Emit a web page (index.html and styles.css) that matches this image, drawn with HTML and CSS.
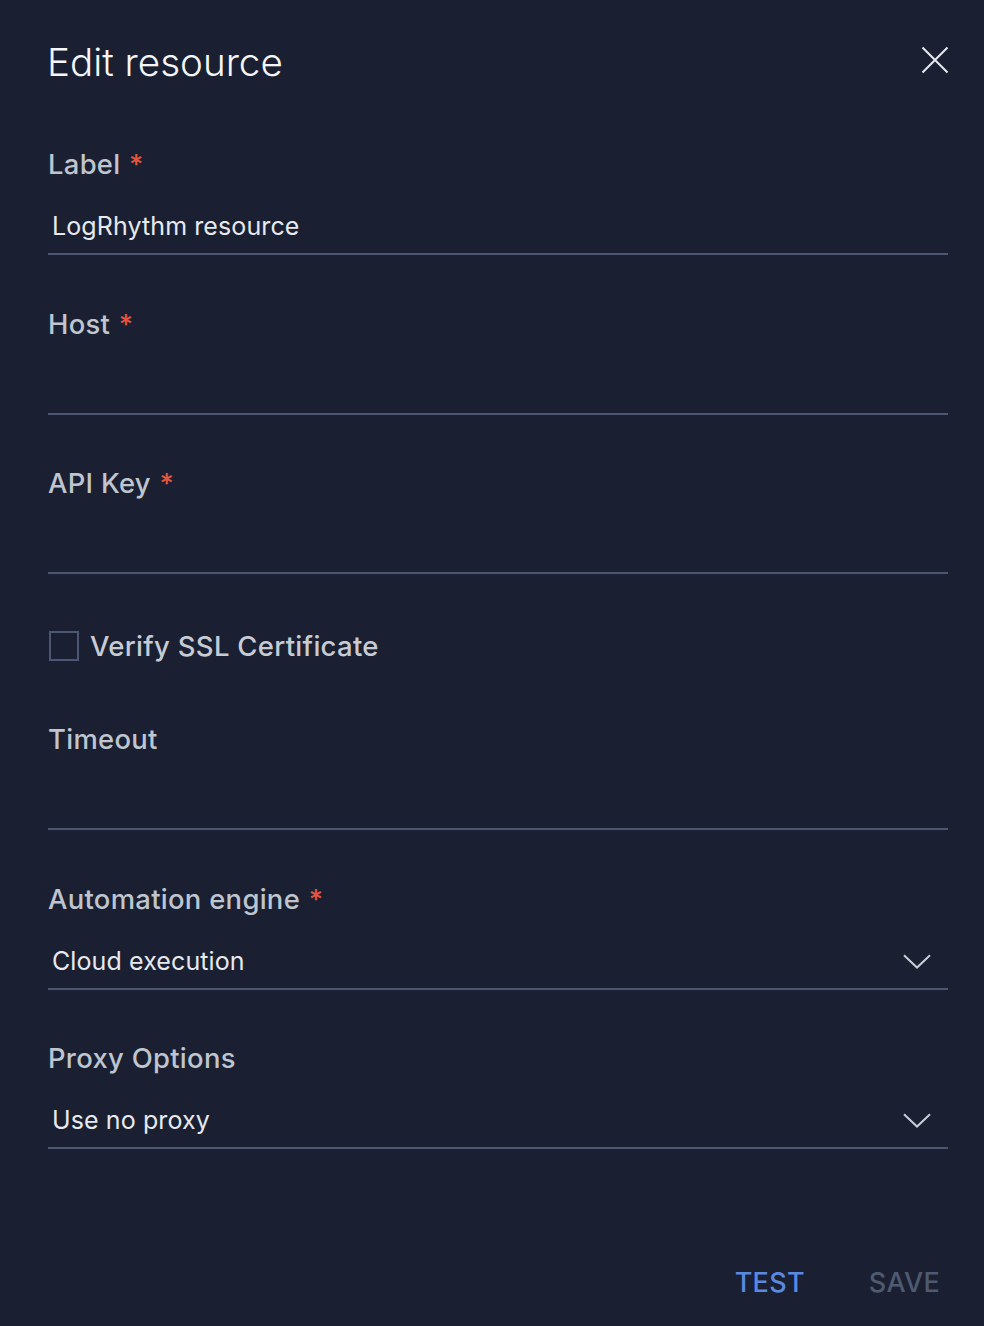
FILE: index.html
```html
<!DOCTYPE html>
<html lang="en">
<head>
<meta charset="utf-8">
<title>Edit resource</title>
<link rel="stylesheet" href="styles.css">
</head>
<body>
<div class="panel">
  <header class="panel-header">
    <h1 class="panel-title">Edit resource</h1>
    <button class="close-btn" aria-label="Close">
      <svg width="28" height="28" viewBox="0 0 28 28"><path d="M1.5 1.5 L26.5 26.5 M26.5 1.5 L1.5 26.5" stroke="#e6e9ee" stroke-width="2" fill="none"/></svg>
    </button>
  </header>

  <div class="field">
    <div class="field-label">Label <span class="req">*</span></div>
    <div class="field-input"><span class="value">LogRhythm resource</span></div>
  </div>

  <div class="field">
    <div class="field-label">Host <span class="req">*</span></div>
    <div class="field-input"></div>
  </div>

  <div class="field">
    <div class="field-label">API Key <span class="req">*</span></div>
    <div class="field-input"></div>
  </div>

  <label class="check-row">
    <span class="check-box"></span>
    <span class="check-text">Verify SSL Certificate</span>
  </label>

  <div class="field field-after-check">
    <div class="field-label">Timeout</div>
    <div class="field-input"></div>
  </div>

  <div class="field">
    <div class="field-label">Automation engine <span class="req">*</span></div>
    <div class="field-input select"><span class="value">Cloud execution</span>
      <svg class="chevron" width="28" height="15" viewBox="0 0 28 15"><path d="M1 1.2 L14 13.5 L27 1.2" stroke="#c9ced6" stroke-width="2" fill="none"/></svg>
    </div>
  </div>

  <div class="field">
    <div class="field-label">Proxy Options</div>
    <div class="field-input select"><span class="value">Use no proxy</span>
      <svg class="chevron" width="28" height="15" viewBox="0 0 28 15"><path d="M1 1.2 L14 13.5 L27 1.2" stroke="#c9ced6" stroke-width="2" fill="none"/></svg>
    </div>
  </div>

  <footer class="panel-footer">
    <button class="btn btn-test">TEST</button>
    <button class="btn btn-save">SAVE</button>
  </footer>
</div>
</body>
</html>
```

FILE: styles.css
```css
html, body {
  margin: 0;
  padding: 0;
  background: #1a2032;
}

body {
  font-family: Inter, Lato, "Liberation Sans", sans-serif;
  color: #c2c8d1;
  width: 984px;
  height: 1326px;
  overflow: hidden;
}

.panel {
  padding: 0 36px 0 48px;
}

.panel-header {
  height: 124px;
  display: flex;
  align-items: center;
  justify-content: space-between;
}

.panel-title {
  margin: 0 0 0 -1px;
  font-size: 38.6px;
  font-weight: 300;
  color: #f4f6f8;
  letter-spacing: 0;
}

.close-btn {
  background: none;
  border: 0;
  padding: 0;
  margin-right: -1px;
  margin-top: -4px;
  width: 28px;
  height: 28px;
  display: flex;
  cursor: pointer;
}

.field {
  margin-top: 49.5px;
}

.field:first-of-type {
  margin-top: 21px;
}

.field-label {
  height: 38px;
  line-height: 38px;
  font-size: 27.4px;
  font-weight: 500;
  color: #bfc5ce;
  letter-spacing: 0.3px;
}

.req {
  color: #e4553f;
  margin-left: 1px;
}

.field-input {
  height: 72px;
  box-sizing: border-box;
  padding: 26px 4px 0;
  border-bottom: 2px solid #4a5672;
  display: flex;
  align-items: flex-start;
  justify-content: space-between;
}

.value {
  line-height: 34px;
  font-size: 25px;
  font-weight: 400;
  color: #e6e9ee;
  letter-spacing: 0.1px;
}

.select .chevron {
  margin-top: 10px;
  margin-right: 13px;
}

.check-row {
  display: flex;
  align-items: center;
  margin-top: 57px;
  height: 30px;
}

.check-box {
  border: 2px solid #4a5672;
  margin-left: 1px;
  box-sizing: content-box;
  width: 26px;
  height: 26px;
}

.check-text {
  margin-left: 11px;
  font-size: 27.5px;
  font-weight: 500;
  color: #c7ccd4;
  letter-spacing: 0.3px;
}

.field-after-check {
  margin-top: 59px;
}

.panel-footer {
  display: flex;
  justify-content: flex-end;
  gap: 64px;
  margin-top: 115px;
  padding-right: 8px;
}

.btn {
  background: none;
  border: 0;
  padding: 0;
  font-family: inherit;
  font-size: 27px;
  font-weight: 500;
  letter-spacing: 0.3px;
  line-height: 38px;
  cursor: pointer;
}

.btn-test {
  color: #5a8ae0;
}

.btn-save {
  color: #4e5a6f;
}
```
